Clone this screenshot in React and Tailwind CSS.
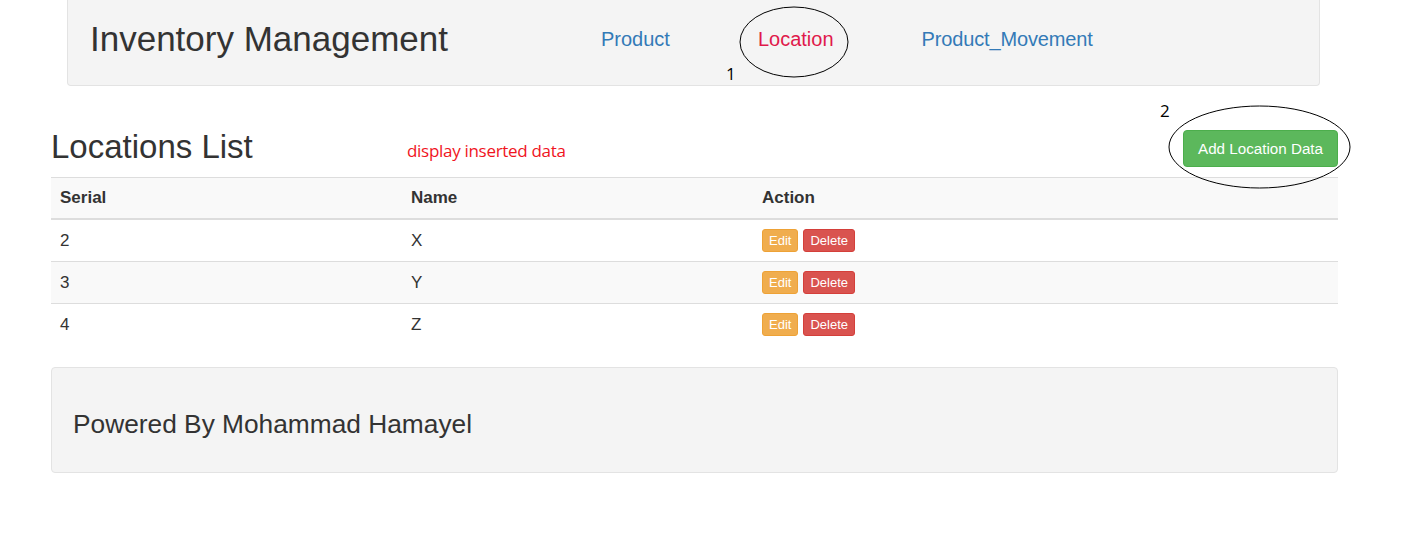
import React from "react";

const rows = [
  { serial: "2", name: "X", striped: false },
  { serial: "3", name: "Y", striped: true },
  { serial: "4", name: "Z", striped: false },
];

export default function App() {
  return (
    <div className="relative w-full min-h-[554px] bg-white text-[#333] font-['Liberation_Sans',Arial,sans-serif]">
      {/* Navbar */}
      <div className="ml-[67px] w-[1253px] h-[86px] bg-[#f4f4f4] border-x border-b border-[#e3e3e3] rounded-b-[4px] pt-[19px] pl-[22px]">
        <div className="flex items-center h-[40px]">
          <div className="text-[35px] leading-[40px] text-[#333]">Inventory Management</div>
          <a className="ml-[153px] text-[20px] leading-[40px] text-[#337ab7]">Product</a>
          <a className="ml-[88px] text-[20px] leading-[40px] text-[#e0194b]">Location</a>
          <a className="ml-[88px] text-[20px] leading-[40px] text-[#337ab7] tracking-[-0.15px]">Product_Movement</a>
        </div>
      </div>

      {/* Main */}
      <div className="ml-[51px] w-[1287px]">
        <div className="mt-[41px] flex items-start h-[40px]">
          <div className="w-[356px] text-[33px] leading-[40px] text-[#333]">Locations List</div>
          <div className="mt-[14px] text-[17px] leading-[20px] text-[#f0141e] font-['Open_Sans','Liberation_Sans',sans-serif] tracking-[-0.3px]">
            display inserted data
          </div>
          <button className="ml-auto mt-[3px] h-[37px] px-[14px] rounded-[4px] bg-[#5cb85c] border border-[#4cae4c] text-white text-[15.2px] leading-[20px]">
            Add Location Data
          </button>
        </div>

        {/* Table */}
        <div className="mt-[10px]">
          <div className="grid grid-cols-[351px_351px_1fr] h-[43px] items-center bg-[#f9f9f9] border-t border-b-2 border-[#dddddd] font-bold text-[17px]">
            <div className="px-[9px]">Serial</div>
            <div className="px-[9px]">Name</div>
            <div className="px-[9px]">Action</div>
          </div>
          {rows.map((r, i) => (
            <div
              key={r.serial}
              className={`grid grid-cols-[351px_351px_1fr] items-center text-[17px] ${
                i === 0 ? "h-[41px]" : "h-[42px] border-t border-[#dddddd]"
              } ${r.striped ? "bg-[#f9f9f9]" : "bg-white"}`}
            >
              <div className="px-[9px]">{r.serial}</div>
              <div className="px-[9px]">{r.name}</div>
              <div className="px-[9px] flex gap-[5px]">
                <button className="h-[23px] px-[6px] rounded-[3px] bg-[#f0ad4e] border border-[#eea236] text-white text-[13px] leading-[20px]">
                  Edit
                </button>
                <button className="h-[23px] px-[6px] rounded-[3px] bg-[#d9534f] border border-[#d43f3a] text-white text-[13px] leading-[20px]">
                  Delete
                </button>
              </div>
            </div>
          ))}
        </div>

        {/* Footer */}
        <div className="mt-[22px] h-[106px] bg-[#f4f4f4] border border-[#e3e3e3] rounded-[4px] pl-[21px] pt-[41px]">
          <div className="text-[26.3px] leading-[30px] text-[#333]">Powered By Mohammad Hamayel</div>
        </div>
      </div>

      {/* Annotations */}
      <svg className="absolute left-0 top-0 pointer-events-none" width="1405" height="554">
        <ellipse cx="794" cy="42" rx="54" ry="35" fill="none" stroke="#000" strokeWidth="1" />
        <ellipse cx="1259.5" cy="147" rx="90.5" ry="41" fill="none" stroke="#000" strokeWidth="1" />
      </svg>
      <div className="absolute left-[726px] top-[64px] text-[17px] leading-[20px] text-black font-['Open_Sans','Liberation_Sans',sans-serif]">1</div>
      <div className="absolute left-[1160px] top-[101px] text-[17px] leading-[20px] text-black font-['Open_Sans','Liberation_Sans',sans-serif]">2</div>
    </div>
  );
}
